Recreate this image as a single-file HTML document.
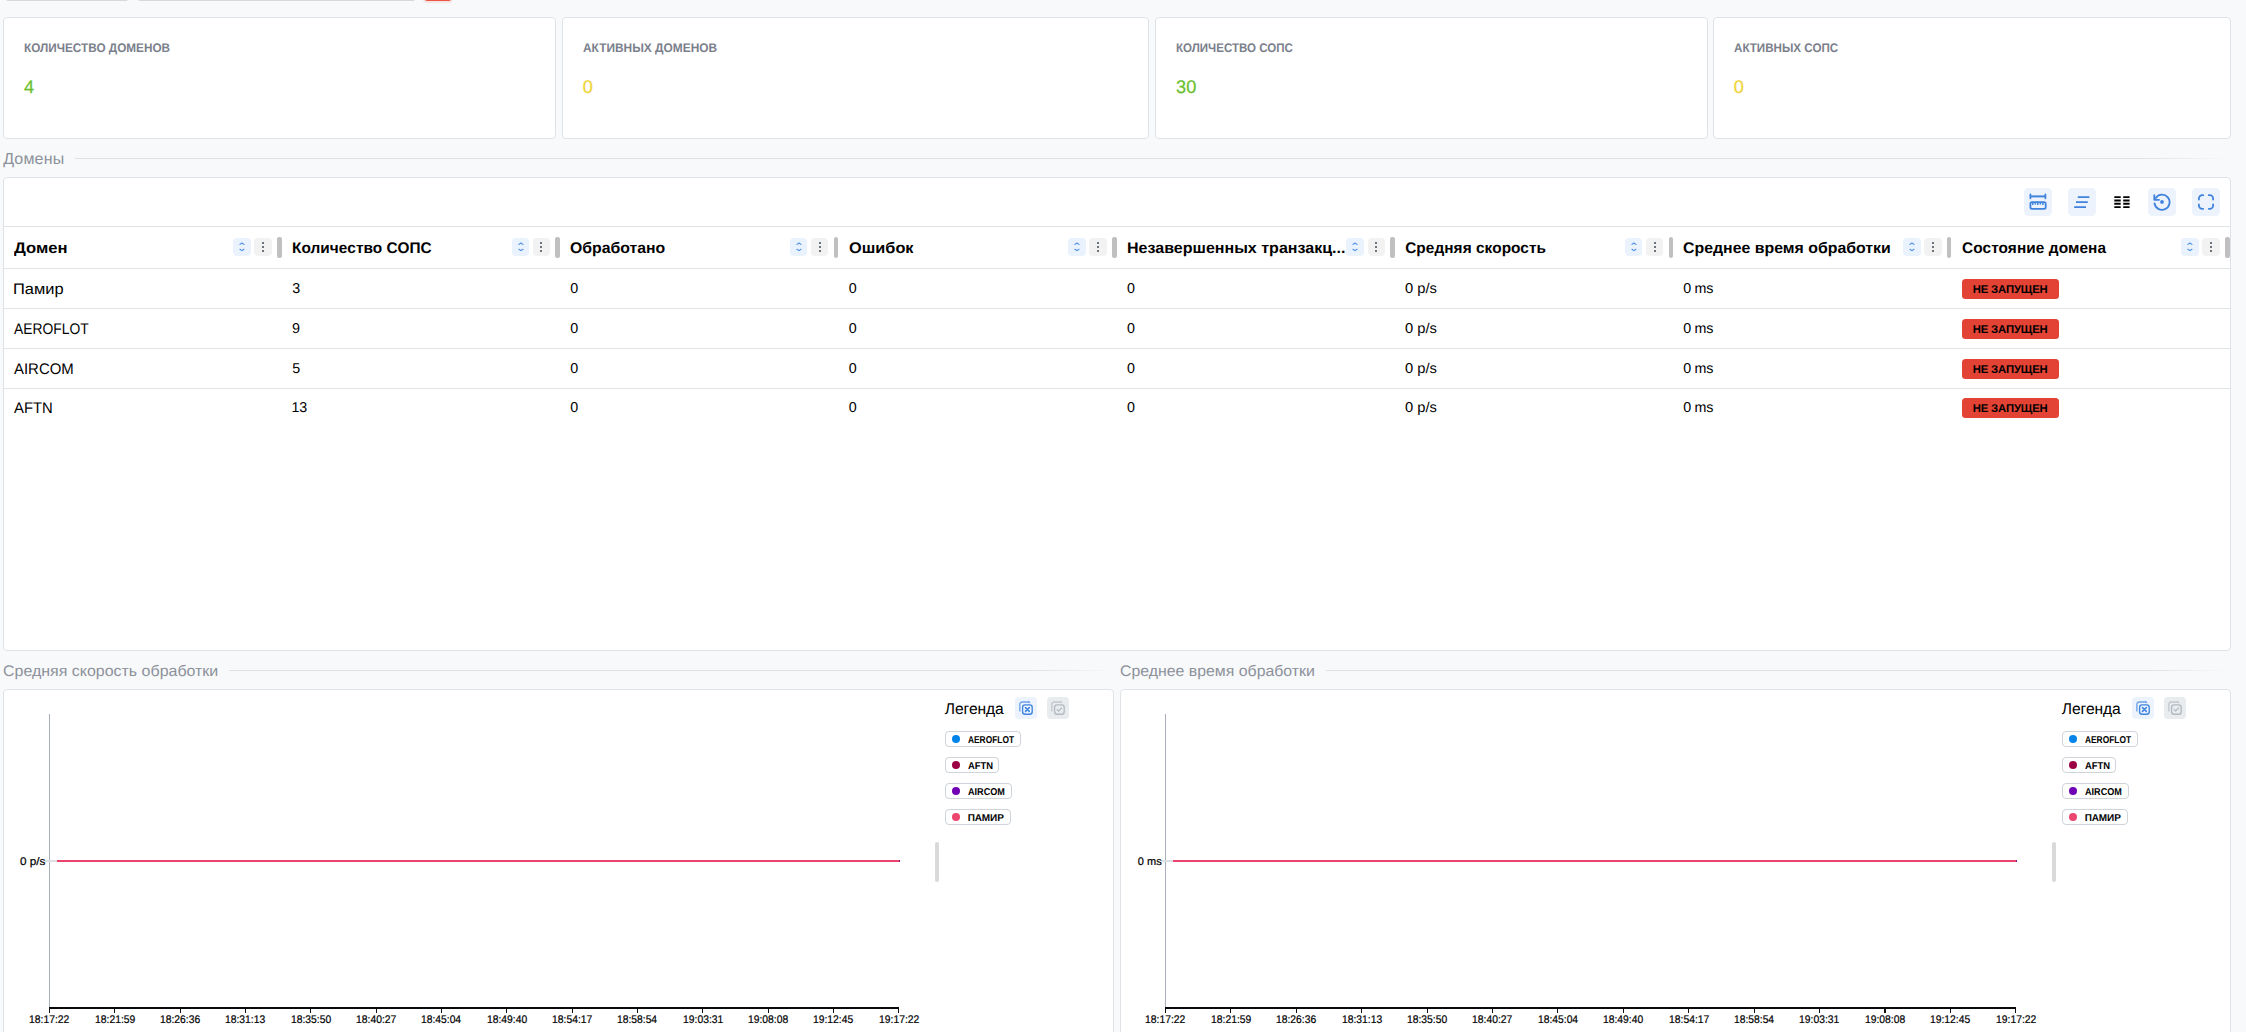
<!DOCTYPE html>
<html><head><meta charset="utf-8"><title>Dashboard</title>
<style>
html,body{margin:0;padding:0;}
body{width:2246px;height:1032px;overflow:hidden;background:#f8f9fb;position:relative;font-family:"Liberation Sans",sans-serif;text-rendering:geometricPrecision;}
.b{position:absolute;box-sizing:content-box;display:block;}
.t{position:absolute;white-space:nowrap;line-height:20px;height:20px;transform-origin:0 50%;}
</style></head><body>
<div class="b" style="left:6.3px;top:-3px;width:121.5px;height:4px;background:#d8d8d8;border-radius:0 0 2px 2px;"></div>
<div class="b" style="left:138.2px;top:-3px;width:276.6px;height:4px;background:#d8d8d8;border-radius:0 0 2px 2px;"></div>
<div class="b" style="left:425.1px;top:-3px;width:25.6px;height:3.9px;background:#ea5545;border-radius:0 0 2px 2px;box-shadow:0 0 0 2.2px rgba(231,76,60,.10);"></div>
<div class="b" style="left:3px;top:17px;width:551px;height:120px;background:#fff;border:1px solid #dfe3e8;border-radius:4px;"></div>
<div class="t" style="left:23.91px;top:37.57px;font-size:12.5px;font-weight:700;color:#7a808b;transform:scaleX(0.9402);">КОЛИЧЕСТВО ДОМЕНОВ</div>
<div class="t" style="left:23.88px;top:76.59px;font-size:18.2px;color:#6bbf2e;-webkit-text-stroke:0.25px #6bbf2e;">4</div>
<div class="b" style="left:562px;top:17px;width:585px;height:120px;background:#fff;border:1px solid #dfe3e8;border-radius:4px;"></div>
<div class="t" style="left:583.40px;top:37.57px;font-size:12.5px;font-weight:700;color:#7a808b;transform:scaleX(0.9523);">АКТИВНЫХ ДОМЕНОВ</div>
<div class="t" style="left:582.79px;top:76.59px;font-size:18.2px;color:#f0d43a;-webkit-text-stroke:0.25px #f0d43a;">0</div>
<div class="b" style="left:1155px;top:17px;width:551px;height:120px;background:#fff;border:1px solid #dfe3e8;border-radius:4px;"></div>
<div class="t" style="left:1176.23px;top:37.57px;font-size:12.5px;font-weight:700;color:#7a808b;transform:scaleX(0.9227);">КОЛИЧЕСТВО СОПС</div>
<div class="t" style="left:1176.11px;top:76.59px;font-size:18.2px;color:#6bbf2e;letter-spacing:0.060px;-webkit-text-stroke:0.25px #6bbf2e;">30</div>
<div class="b" style="left:1713px;top:17px;width:516px;height:120px;background:#fff;border:1px solid #dfe3e8;border-radius:4px;"></div>
<div class="t" style="left:1734.41px;top:37.57px;font-size:12.5px;font-weight:700;color:#7a808b;transform:scaleX(0.9293);">АКТИВНЫХ СОПС</div>
<div class="t" style="left:1733.79px;top:76.59px;font-size:18.2px;color:#f0d43a;-webkit-text-stroke:0.25px #f0d43a;">0</div>
<div class="t" style="left:3.18px;top:149.56px;font-size:16px;color:#8c919a;letter-spacing:0.172px;">Домены</div>
<div class="b" style="left:75px;top:158px;width:2155px;height:1px;background:linear-gradient(90deg,#dee1e6 95.8%,rgba(222,225,230,0));"></div>
<div class="b" style="left:3px;top:177px;width:2226px;height:472px;background:#fff;border:1px solid #dfe3e8;border-radius:4px;"></div>
<div class="b" style="left:4px;top:226px;width:2226px;height:1px;background:#dfe2e7;"></div>
<div class="b" style="left:4px;top:268px;width:2226px;height:1px;background:#dfe2e7;"></div>
<div class="b" style="left:4px;top:308px;width:2226px;height:1px;background:#dfe2e7;"></div>
<div class="b" style="left:4px;top:348px;width:2226px;height:1px;background:#dfe2e7;"></div>
<div class="b" style="left:4px;top:388px;width:2226px;height:1px;background:#dfe2e7;"></div>
<div class="b" style="left:2024.1px;top:188px;width:28px;height:28px;background:#ecf3fd;border-radius:4.5px;"></div>
<div class="b" style="left:2068.1px;top:188px;width:28px;height:28px;background:#ecf3fd;border-radius:4.5px;"></div>
<div class="b" style="left:2148.2px;top:188px;width:28px;height:28px;background:#ecf3fd;border-radius:4.5px;"></div>
<div class="b" style="left:2192.1px;top:188px;width:28px;height:28px;background:#ecf3fd;border-radius:4.5px;"></div>
<svg class="b" style="left:2024.1px;top:187.9px" width="28" height="28" viewBox="0 0 28 28" fill="none" stroke="#4083dd" stroke-width="1.8" ><path d="M6.4 6.5v3.8M21.4 6.5v3.8" stroke-linecap="round"/><path d="M6.3 8.4h15.2" stroke-width="2"/><rect x="6.4" y="14.1" width="15.3" height="6.7" rx="1.6"/><path d="M8.8 14.5v2.6M11.3 14.5v1.9M13.8 14.5v2.6M16.4 14.5v1.9M18.9 14.5v2.6" stroke-width="1.5"/></svg>
<svg class="b" style="left:2068.1px;top:187.9px" width="28" height="28" viewBox="0 0 28 28" fill="none" stroke="#4083dd" stroke-width="1.8" ><path d="M9.8 9.1h11.6M8 14.1h11.8M6.2 19.2h11.8" stroke-linecap="butt"/></svg>
<svg class="b" style="left:2110px;top:187.9px" width="28" height="28" viewBox="0 0 28 28" fill="none" stroke="#000" stroke-width="1.9" ><path d="M4.3 9.1h6.4M4.3 12.5h6.4M4.3 15.7h6.4M4.3 19.1h6.4M13.2 9.1h6.4M13.2 12.5h6.4M13.2 15.7h6.4M13.2 19.1h6.4"/></svg>
<svg class="b" style="left:2148.2px;top:187.9px" width="28" height="28" viewBox="0 0 28 28" fill="none" stroke="#4083dd" stroke-width="1.8" ><path d="M6.55 15.3A7.55 7.55 0 1 0 7.8 10.0" stroke-linecap="round"/><path d="M6.3 7.2v4.6h4.7" stroke-linecap="round" stroke-linejoin="round"/><circle cx="14.0" cy="13.9" r="1.9" fill="#4083dd" stroke="none"/></svg>
<svg class="b" style="left:2192.1px;top:187.9px" width="28" height="28" viewBox="0 0 28 28" fill="none" stroke="#4083dd" stroke-width="1.8" ><path d="M6.9 11.5V10.6A3.4 3.4 0 0 1 10.3 7.2H11.2M16.8 7.2H17.700000000000003A3.4 3.4 0 0 1 21.1 10.6V11.5M21.1 16.5V17.400000000000002A3.4 3.4 0 0 1 17.700000000000003 20.8H16.8M11.2 20.8H10.3A3.4 3.4 0 0 1 6.9 17.400000000000002V16.5" stroke-linecap="round"/></svg>
<div class="t" style="left:14.15px;top:238.66px;font-size:15.4px;font-weight:700;color:#000;transform:scaleX(1.0821);">Домен</div>
<div class="b" style="left:233.2px;top:238.3px;width:17.6px;height:17.6px;background:#eaf2fd;border-radius:4px;"></div>
<svg class="b" style="left:233.2px;top:238.3px" width="17.6" height="17.6" viewBox="0 0 17.6 17.6" fill="none" stroke="#4a8fe7" stroke-width="1.15" stroke-linecap="round" stroke-linejoin="round"><path d="M6.95 6.4L8.95 5.0L10.95 6.4M6.95 11.3L8.95 12.65L10.95 11.3"/></svg>
<div class="b" style="left:254.3px;top:238.3px;width:17.6px;height:17.6px;background:#f2f2f2;border-radius:4px;"></div>
<div class="b" style="left:262.0px;top:242px;width:2.2px;height:2.2px;background:#6c757d;"></div>
<div class="b" style="left:262.0px;top:246.1px;width:2.2px;height:2.2px;background:#6c757d;"></div>
<div class="b" style="left:262.0px;top:250.2px;width:2.2px;height:2.2px;background:#6c757d;"></div>
<div class="b" style="left:277.0px;top:237px;width:4.7px;height:20.8px;background:#c0c0c0;border-radius:2px;"></div>
<div class="t" style="left:291.97px;top:238.66px;font-size:15.4px;font-weight:700;color:#000;letter-spacing:0.060px;">Количество СОПС</div>
<div class="b" style="left:511.5px;top:238.3px;width:17.6px;height:17.6px;background:#eaf2fd;border-radius:4px;"></div>
<svg class="b" style="left:511.5px;top:238.3px" width="17.6" height="17.6" viewBox="0 0 17.6 17.6" fill="none" stroke="#4a8fe7" stroke-width="1.15" stroke-linecap="round" stroke-linejoin="round"><path d="M6.95 6.4L8.95 5.0L10.95 6.4M6.95 11.3L8.95 12.65L10.95 11.3"/></svg>
<div class="b" style="left:532.6px;top:238.3px;width:17.6px;height:17.6px;background:#f2f2f2;border-radius:4px;"></div>
<div class="b" style="left:540.3px;top:242px;width:2.2px;height:2.2px;background:#6c757d;"></div>
<div class="b" style="left:540.3px;top:246.1px;width:2.2px;height:2.2px;background:#6c757d;"></div>
<div class="b" style="left:540.3px;top:250.2px;width:2.2px;height:2.2px;background:#6c757d;"></div>
<div class="b" style="left:555.3px;top:237px;width:4.7px;height:20.8px;background:#c0c0c0;border-radius:2px;"></div>
<div class="t" style="left:570.15px;top:238.66px;font-size:15.4px;font-weight:700;color:#000;transform:scaleX(1.0265);">Обработано</div>
<div class="b" style="left:789.8px;top:238.3px;width:17.6px;height:17.6px;background:#eaf2fd;border-radius:4px;"></div>
<svg class="b" style="left:789.8px;top:238.3px" width="17.6" height="17.6" viewBox="0 0 17.6 17.6" fill="none" stroke="#4a8fe7" stroke-width="1.15" stroke-linecap="round" stroke-linejoin="round"><path d="M6.95 6.4L8.95 5.0L10.95 6.4M6.95 11.3L8.95 12.65L10.95 11.3"/></svg>
<div class="b" style="left:810.9px;top:238.3px;width:17.6px;height:17.6px;background:#f2f2f2;border-radius:4px;"></div>
<div class="b" style="left:818.6px;top:242px;width:2.2px;height:2.2px;background:#6c757d;"></div>
<div class="b" style="left:818.6px;top:246.1px;width:2.2px;height:2.2px;background:#6c757d;"></div>
<div class="b" style="left:818.6px;top:250.2px;width:2.2px;height:2.2px;background:#6c757d;"></div>
<div class="b" style="left:833.6px;top:237px;width:4.7px;height:20.8px;background:#c0c0c0;border-radius:2px;"></div>
<div class="t" style="left:848.53px;top:238.66px;font-size:15.4px;font-weight:700;color:#000;transform:scaleX(1.0600);">Ошибок</div>
<div class="b" style="left:1068.1px;top:238.3px;width:17.6px;height:17.6px;background:#eaf2fd;border-radius:4px;"></div>
<svg class="b" style="left:1068.1px;top:238.3px" width="17.6" height="17.6" viewBox="0 0 17.6 17.6" fill="none" stroke="#4a8fe7" stroke-width="1.15" stroke-linecap="round" stroke-linejoin="round"><path d="M6.95 6.4L8.95 5.0L10.95 6.4M6.95 11.3L8.95 12.65L10.95 11.3"/></svg>
<div class="b" style="left:1089.2px;top:238.3px;width:17.6px;height:17.6px;background:#f2f2f2;border-radius:4px;"></div>
<div class="b" style="left:1096.9px;top:242px;width:2.2px;height:2.2px;background:#6c757d;"></div>
<div class="b" style="left:1096.9px;top:246.1px;width:2.2px;height:2.2px;background:#6c757d;"></div>
<div class="b" style="left:1096.9px;top:250.2px;width:2.2px;height:2.2px;background:#6c757d;"></div>
<div class="b" style="left:1111.9px;top:237px;width:4.7px;height:20.8px;background:#c0c0c0;border-radius:2px;"></div>
<div class="t" style="left:1126.93px;top:238.66px;font-size:15.4px;font-weight:700;color:#000;transform:scaleX(1.0418);">Незавершенных транзакц...</div>
<div class="b" style="left:1346.4px;top:238.3px;width:17.6px;height:17.6px;background:#eaf2fd;border-radius:4px;"></div>
<svg class="b" style="left:1346.4px;top:238.3px" width="17.6" height="17.6" viewBox="0 0 17.6 17.6" fill="none" stroke="#4a8fe7" stroke-width="1.15" stroke-linecap="round" stroke-linejoin="round"><path d="M6.95 6.4L8.95 5.0L10.95 6.4M6.95 11.3L8.95 12.65L10.95 11.3"/></svg>
<div class="b" style="left:1367.5px;top:238.3px;width:17.6px;height:17.6px;background:#f2f2f2;border-radius:4px;"></div>
<div class="b" style="left:1375.2px;top:242px;width:2.2px;height:2.2px;background:#6c757d;"></div>
<div class="b" style="left:1375.2px;top:246.1px;width:2.2px;height:2.2px;background:#6c757d;"></div>
<div class="b" style="left:1375.2px;top:250.2px;width:2.2px;height:2.2px;background:#6c757d;"></div>
<div class="b" style="left:1390.2px;top:237px;width:4.7px;height:20.8px;background:#c0c0c0;border-radius:2px;"></div>
<div class="t" style="left:1405.17px;top:238.66px;font-size:15.4px;font-weight:700;color:#000;letter-spacing:0.059px;">Средняя скорость</div>
<div class="b" style="left:1624.7px;top:238.3px;width:17.6px;height:17.6px;background:#eaf2fd;border-radius:4px;"></div>
<svg class="b" style="left:1624.7px;top:238.3px" width="17.6" height="17.6" viewBox="0 0 17.6 17.6" fill="none" stroke="#4a8fe7" stroke-width="1.15" stroke-linecap="round" stroke-linejoin="round"><path d="M6.95 6.4L8.95 5.0L10.95 6.4M6.95 11.3L8.95 12.65L10.95 11.3"/></svg>
<div class="b" style="left:1645.8px;top:238.3px;width:17.6px;height:17.6px;background:#f2f2f2;border-radius:4px;"></div>
<div class="b" style="left:1653.5px;top:242px;width:2.2px;height:2.2px;background:#6c757d;"></div>
<div class="b" style="left:1653.5px;top:246.1px;width:2.2px;height:2.2px;background:#6c757d;"></div>
<div class="b" style="left:1653.5px;top:250.2px;width:2.2px;height:2.2px;background:#6c757d;"></div>
<div class="b" style="left:1668.5px;top:237px;width:4.7px;height:20.8px;background:#c0c0c0;border-radius:2px;"></div>
<div class="t" style="left:1683.05px;top:238.66px;font-size:15.4px;font-weight:700;color:#000;transform:scaleX(1.0314);">Среднее время обработки</div>
<div class="b" style="left:1903.0px;top:238.3px;width:17.6px;height:17.6px;background:#eaf2fd;border-radius:4px;"></div>
<svg class="b" style="left:1903.0px;top:238.3px" width="17.6" height="17.6" viewBox="0 0 17.6 17.6" fill="none" stroke="#4a8fe7" stroke-width="1.15" stroke-linecap="round" stroke-linejoin="round"><path d="M6.95 6.4L8.95 5.0L10.95 6.4M6.95 11.3L8.95 12.65L10.95 11.3"/></svg>
<div class="b" style="left:1924.1px;top:238.3px;width:17.6px;height:17.6px;background:#f2f2f2;border-radius:4px;"></div>
<div class="b" style="left:1931.8px;top:242px;width:2.2px;height:2.2px;background:#6c757d;"></div>
<div class="b" style="left:1931.8px;top:246.1px;width:2.2px;height:2.2px;background:#6c757d;"></div>
<div class="b" style="left:1931.8px;top:250.2px;width:2.2px;height:2.2px;background:#6c757d;"></div>
<div class="b" style="left:1946.8px;top:237px;width:4.7px;height:20.8px;background:#c0c0c0;border-radius:2px;"></div>
<div class="t" style="left:1962.07px;top:238.66px;font-size:15.4px;font-weight:700;color:#000;letter-spacing:0.079px;">Состояние домена</div>
<div class="b" style="left:2181.3px;top:238.3px;width:17.6px;height:17.6px;background:#eaf2fd;border-radius:4px;"></div>
<svg class="b" style="left:2181.3px;top:238.3px" width="17.6" height="17.6" viewBox="0 0 17.6 17.6" fill="none" stroke="#4a8fe7" stroke-width="1.15" stroke-linecap="round" stroke-linejoin="round"><path d="M6.95 6.4L8.95 5.0L10.95 6.4M6.95 11.3L8.95 12.65L10.95 11.3"/></svg>
<div class="b" style="left:2202.4px;top:238.3px;width:17.6px;height:17.6px;background:#f2f2f2;border-radius:4px;"></div>
<div class="b" style="left:2210.1px;top:242px;width:2.2px;height:2.2px;background:#6c757d;"></div>
<div class="b" style="left:2210.1px;top:246.1px;width:2.2px;height:2.2px;background:#6c757d;"></div>
<div class="b" style="left:2210.1px;top:250.2px;width:2.2px;height:2.2px;background:#6c757d;"></div>
<div class="b" style="left:2225.1px;top:237px;width:4.7px;height:20.8px;background:#c0c0c0;border-radius:2px;"></div>
<div class="t" style="left:12.97px;top:279.86px;font-size:15.4px;color:#000;transform:scaleX(1.0683);">Памир</div>
<div class="t" style="left:292.16px;top:278.95px;font-size:14.3px;color:#000;">3</div>
<div class="t" style="left:570.34px;top:278.95px;font-size:14.3px;color:#000;">0</div>
<div class="t" style="left:848.64px;top:278.95px;font-size:14.3px;color:#000;">0</div>
<div class="t" style="left:1126.94px;top:278.95px;font-size:14.3px;color:#000;">0</div>
<div class="t" style="left:1404.83px;top:278.95px;font-size:14.3px;color:#000;transform:scaleX(1.0292);">0 p/s</div>
<div class="t" style="left:1683.14px;top:278.95px;font-size:14.3px;color:#000;letter-spacing:-0.238px;">0 ms</div>
<div class="b" style="left:1962px;top:279px;width:97px;height:20px;background:#e34335;border-radius:3.5px;"></div>
<div class="t" style="left:1972.64px;top:279.88px;font-size:11.3px;font-weight:700;color:#000;letter-spacing:-0.125px;">НЕ ЗАПУЩЕН</div>
<div class="t" style="left:14.27px;top:319.86px;font-size:15.4px;color:#000;transform:scaleX(0.8993);">AEROFLOT</div>
<div class="t" style="left:292.03px;top:318.85px;font-size:14.3px;color:#000;">9</div>
<div class="t" style="left:570.34px;top:318.85px;font-size:14.3px;color:#000;">0</div>
<div class="t" style="left:848.64px;top:318.85px;font-size:14.3px;color:#000;">0</div>
<div class="t" style="left:1126.94px;top:318.85px;font-size:14.3px;color:#000;">0</div>
<div class="t" style="left:1404.83px;top:318.85px;font-size:14.3px;color:#000;transform:scaleX(1.0292);">0 p/s</div>
<div class="t" style="left:1683.14px;top:318.85px;font-size:14.3px;color:#000;letter-spacing:-0.238px;">0 ms</div>
<div class="b" style="left:1962px;top:319px;width:97px;height:20px;background:#e34335;border-radius:3.5px;"></div>
<div class="t" style="left:1972.64px;top:319.78px;font-size:11.3px;font-weight:700;color:#000;letter-spacing:-0.125px;">НЕ ЗАПУЩЕН</div>
<div class="t" style="left:14.27px;top:359.86px;font-size:15.4px;color:#000;transform:scaleX(0.9700);">AIRCOM</div>
<div class="t" style="left:292.13px;top:358.75px;font-size:14.3px;color:#000;">5</div>
<div class="t" style="left:570.34px;top:358.75px;font-size:14.3px;color:#000;">0</div>
<div class="t" style="left:848.64px;top:358.75px;font-size:14.3px;color:#000;">0</div>
<div class="t" style="left:1126.94px;top:358.75px;font-size:14.3px;color:#000;">0</div>
<div class="t" style="left:1404.83px;top:358.75px;font-size:14.3px;color:#000;transform:scaleX(1.0292);">0 p/s</div>
<div class="t" style="left:1683.14px;top:358.75px;font-size:14.3px;color:#000;letter-spacing:-0.238px;">0 ms</div>
<div class="b" style="left:1962px;top:359px;width:97px;height:20px;background:#e34335;border-radius:3.5px;"></div>
<div class="t" style="left:1972.64px;top:359.68px;font-size:11.3px;font-weight:700;color:#000;letter-spacing:-0.125px;">НЕ ЗАПУЩЕН</div>
<div class="t" style="left:14.27px;top:398.76px;font-size:15.4px;color:#000;transform:scaleX(0.9635);">AFTN</div>
<div class="t" style="left:291.61px;top:397.95px;font-size:14.3px;color:#000;letter-spacing:-0.188px;">13</div>
<div class="t" style="left:570.34px;top:397.95px;font-size:14.3px;color:#000;">0</div>
<div class="t" style="left:848.64px;top:397.95px;font-size:14.3px;color:#000;">0</div>
<div class="t" style="left:1126.94px;top:397.95px;font-size:14.3px;color:#000;">0</div>
<div class="t" style="left:1404.83px;top:397.95px;font-size:14.3px;color:#000;transform:scaleX(1.0292);">0 p/s</div>
<div class="t" style="left:1683.14px;top:397.95px;font-size:14.3px;color:#000;letter-spacing:-0.238px;">0 ms</div>
<div class="b" style="left:1962px;top:398px;width:97px;height:20px;background:#e34335;border-radius:3.5px;"></div>
<div class="t" style="left:1972.64px;top:398.88px;font-size:11.3px;font-weight:700;color:#000;letter-spacing:-0.125px;">НЕ ЗАПУЩЕН</div>
<div class="t" style="left:2.79px;top:661.76px;font-size:15.4px;color:#8c919a;transform:scaleX(1.0372);">Средняя скорость обработки</div>
<div class="b" style="left:229px;top:670px;width:884px;height:1px;background:linear-gradient(90deg,#dee1e6 90.7%,rgba(222,225,230,0));"></div>
<div class="b" style="left:3px;top:689px;width:1109px;height:350px;background:#fff;border:1px solid #dfe3e8;border-radius:4px;"></div>
<div class="b" style="left:49px;top:714px;width:1px;height:293px;background:#a9afba;"></div>
<div class="b" style="left:49px;top:1007px;width:850.0px;height:2.2px;background:#080a0e;"></div>
<div class="b" style="left:48.9px;top:1009px;width:1.1px;height:3.9px;background:#111;"></div>
<div class="t" style="left:29.26px;top:1010.09px;font-size:11px;color:#000;transform:scaleX(0.9414);-webkit-text-stroke:0.2px #000;">18:17:22</div>
<div class="b" style="left:114.24px;top:1009px;width:1.1px;height:3.9px;background:#111;"></div>
<div class="t" style="left:94.60px;top:1010.09px;font-size:11px;color:#000;transform:scaleX(0.9407);-webkit-text-stroke:0.2px #000;">18:21:59</div>
<div class="b" style="left:179.58px;top:1009px;width:1.1px;height:3.9px;background:#111;"></div>
<div class="t" style="left:159.94px;top:1010.09px;font-size:11px;color:#000;transform:scaleX(0.9398);-webkit-text-stroke:0.2px #000;">18:26:36</div>
<div class="b" style="left:244.92px;top:1009px;width:1.1px;height:3.9px;background:#111;"></div>
<div class="t" style="left:225.28px;top:1010.09px;font-size:11px;color:#000;transform:scaleX(0.9398);-webkit-text-stroke:0.2px #000;">18:31:13</div>
<div class="b" style="left:310.25px;top:1009px;width:1.1px;height:3.9px;background:#111;"></div>
<div class="t" style="left:290.62px;top:1010.09px;font-size:11px;color:#000;transform:scaleX(0.9386);-webkit-text-stroke:0.2px #000;">18:35:50</div>
<div class="b" style="left:375.59px;top:1009px;width:1.1px;height:3.9px;background:#111;"></div>
<div class="t" style="left:355.95px;top:1010.09px;font-size:11px;color:#000;transform:scaleX(0.9414);-webkit-text-stroke:0.2px #000;">18:40:27</div>
<div class="b" style="left:440.93px;top:1009px;width:1.1px;height:3.9px;background:#111;"></div>
<div class="t" style="left:421.30px;top:1010.09px;font-size:11px;color:#000;transform:scaleX(0.9362);-webkit-text-stroke:0.2px #000;">18:45:04</div>
<div class="b" style="left:506.27px;top:1009px;width:1.1px;height:3.9px;background:#111;"></div>
<div class="t" style="left:486.63px;top:1010.09px;font-size:11px;color:#000;transform:scaleX(0.9386);-webkit-text-stroke:0.2px #000;">18:49:40</div>
<div class="b" style="left:571.61px;top:1009px;width:1.1px;height:3.9px;background:#111;"></div>
<div class="t" style="left:551.97px;top:1010.09px;font-size:11px;color:#000;transform:scaleX(0.9414);-webkit-text-stroke:0.2px #000;">18:54:17</div>
<div class="b" style="left:636.95px;top:1009px;width:1.1px;height:3.9px;background:#111;"></div>
<div class="t" style="left:617.31px;top:1010.09px;font-size:11px;color:#000;transform:scaleX(0.9362);-webkit-text-stroke:0.2px #000;">18:58:54</div>
<div class="b" style="left:702.28px;top:1009px;width:1.1px;height:3.9px;background:#111;"></div>
<div class="t" style="left:682.65px;top:1010.09px;font-size:11px;color:#000;transform:scaleX(0.9410);-webkit-text-stroke:0.2px #000;">19:03:31</div>
<div class="b" style="left:767.62px;top:1009px;width:1.1px;height:3.9px;background:#111;"></div>
<div class="t" style="left:747.99px;top:1010.09px;font-size:11px;color:#000;transform:scaleX(0.9397);-webkit-text-stroke:0.2px #000;">19:08:08</div>
<div class="b" style="left:832.96px;top:1009px;width:1.1px;height:3.9px;background:#111;"></div>
<div class="t" style="left:813.32px;top:1010.09px;font-size:11px;color:#000;transform:scaleX(0.9393);-webkit-text-stroke:0.2px #000;">19:12:45</div>
<div class="b" style="left:898.3px;top:1009px;width:1.1px;height:3.9px;background:#111;"></div>
<div class="t" style="left:878.66px;top:1010.09px;font-size:11px;color:#000;transform:scaleX(0.9414);-webkit-text-stroke:0.2px #000;">19:17:22</div>
<div class="b" style="left:45.4px;top:860px;width:11.3px;height:2.1px;background:#dcdfe3;"></div>
<div class="t" style="left:20.34px;top:852.29px;font-size:11px;color:#000;transform:scaleX(1.0686);-webkit-text-stroke:0.2px #000;">0 p/s</div>
<div class="b" style="left:56.7px;top:860px;width:843.3px;height:2.1px;background:#ec426b;"></div>
<div class="b" style="left:899.0px;top:860px;width:1px;height:2.1px;background:#8a1a8a;"></div>
<div class="b" style="left:935px;top:842px;width:4px;height:40px;background:#d9d9d9;border-radius:2px;"></div>
<div class="t" style="left:944.86px;top:700.09px;font-size:15.6px;color:#000;letter-spacing:-0.073px;">Легенда</div>
<div class="b" style="left:1015.1px;top:697px;width:21.9px;height:22px;background:#ecf3fd;border-radius:4px;"></div>
<svg class="b" style="left:1015.1px;top:697px" width="22" height="22" viewBox="0 0 22 22" fill="none" stroke="#3f84e0" stroke-width="1.35" stroke-linecap="round" stroke-linejoin="round"><path d="M4.85 14.4V7.3A2.3 2.3 0 0 1 7.15 5H14.1" stroke="#6fa3e8" stroke-linecap="butt"/><path d="M13.6 4.3l1.1 1.3" stroke="#6fa3e8" stroke-width="1.2"/><rect x="7.6" y="7.8" width="9.6" height="9.4" rx="2.5"/><path d="M10.5 10.6l3.8 3.8M14.3 10.6l-3.8 3.8" stroke-width="1.5"/></svg>
<div class="b" style="left:1047.1px;top:697px;width:21.9px;height:22px;background:#e9ecef;border-radius:4px;"></div>
<svg class="b" style="left:1047.1px;top:697px" width="22" height="22" viewBox="0 0 22 22" fill="none" stroke="#b4b9c1" stroke-width="1.35" stroke-linecap="round" stroke-linejoin="round"><path d="M4.85 14.4V7.3A2.3 2.3 0 0 1 7.15 5H14.1" stroke="#c3c7cd" stroke-linecap="butt"/><path d="M13.6 4.3l1.1 1.3" stroke="#c3c7cd" stroke-width="1.2"/><rect x="7.6" y="7.8" width="9.6" height="9.4" rx="2.5"/><path d="M10.2 12.7l1.4 1.3l3.1-3.1" stroke-width="1.2"/></svg>
<div class="b" style="left:945px;top:731px;width:74px;height:14px;border:1px solid #ced4da;border-radius:4px;background:#fff;"></div>
<div class="b" style="left:951.9px;top:734.9px;width:8.3px;height:8.3px;background:#0084e8;border-radius:50%;"></div>
<div class="t" style="left:967.89px;top:730.64px;font-size:10.0px;font-weight:700;color:#000;transform:scaleX(0.8364);">AEROFLOT</div>
<div class="b" style="left:945px;top:757px;width:52px;height:14px;border:1px solid #ced4da;border-radius:4px;background:#fff;"></div>
<div class="b" style="left:951.9px;top:760.9px;width:8.3px;height:8.3px;background:#9b0045;border-radius:50%;"></div>
<div class="t" style="left:967.77px;top:756.64px;font-size:10.0px;font-weight:700;color:#000;transform:scaleX(0.9403);">AFTN</div>
<div class="b" style="left:945px;top:783px;width:65px;height:14px;border:1px solid #ced4da;border-radius:4px;background:#fff;"></div>
<div class="b" style="left:951.9px;top:786.9px;width:8.3px;height:8.3px;background:#6f00b3;border-radius:50%;"></div>
<div class="t" style="left:967.77px;top:782.64px;font-size:10.0px;font-weight:700;color:#000;transform:scaleX(0.9083);">AIRCOM</div>
<div class="b" style="left:945px;top:809px;width:64px;height:14px;border:1px solid #ced4da;border-radius:4px;background:#fff;"></div>
<div class="b" style="left:951.9px;top:812.9px;width:8.3px;height:8.3px;background:#ed466e;border-radius:50%;"></div>
<div class="t" style="left:967.63px;top:808.64px;font-size:10.0px;font-weight:700;color:#000;letter-spacing:-0.096px;">ПАМИР</div>
<div class="t" style="left:1119.79px;top:661.76px;font-size:15.4px;color:#8c919a;transform:scaleX(1.0303);">Среднее время обработки</div>
<div class="b" style="left:1326px;top:670px;width:904px;height:1px;background:linear-gradient(90deg,#dee1e6 90.9%,rgba(222,225,230,0));"></div>
<div class="b" style="left:1120px;top:689px;width:1109px;height:350px;background:#fff;border:1px solid #dfe3e8;border-radius:4px;"></div>
<div class="b" style="left:1165px;top:714px;width:1px;height:293px;background:#a9afba;"></div>
<div class="b" style="left:1165px;top:1007px;width:851.0px;height:2.2px;background:#080a0e;"></div>
<div class="b" style="left:1164.9px;top:1009px;width:1.1px;height:3.9px;background:#111;"></div>
<div class="t" style="left:1145.26px;top:1010.09px;font-size:11px;color:#000;transform:scaleX(0.9414);-webkit-text-stroke:0.2px #000;">18:17:22</div>
<div class="b" style="left:1230.32px;top:1009px;width:1.1px;height:3.9px;background:#111;"></div>
<div class="t" style="left:1210.68px;top:1010.09px;font-size:11px;color:#000;transform:scaleX(0.9407);-webkit-text-stroke:0.2px #000;">18:21:59</div>
<div class="b" style="left:1295.73px;top:1009px;width:1.1px;height:3.9px;background:#111;"></div>
<div class="t" style="left:1276.09px;top:1010.09px;font-size:11px;color:#000;transform:scaleX(0.9398);-webkit-text-stroke:0.2px #000;">18:26:36</div>
<div class="b" style="left:1361.15px;top:1009px;width:1.1px;height:3.9px;background:#111;"></div>
<div class="t" style="left:1341.51px;top:1010.09px;font-size:11px;color:#000;transform:scaleX(0.9398);-webkit-text-stroke:0.2px #000;">18:31:13</div>
<div class="b" style="left:1426.56px;top:1009px;width:1.1px;height:3.9px;background:#111;"></div>
<div class="t" style="left:1406.93px;top:1010.09px;font-size:11px;color:#000;transform:scaleX(0.9386);-webkit-text-stroke:0.2px #000;">18:35:50</div>
<div class="b" style="left:1491.98px;top:1009px;width:1.1px;height:3.9px;background:#111;"></div>
<div class="t" style="left:1472.34px;top:1010.09px;font-size:11px;color:#000;transform:scaleX(0.9414);-webkit-text-stroke:0.2px #000;">18:40:27</div>
<div class="b" style="left:1557.39px;top:1009px;width:1.1px;height:3.9px;background:#111;"></div>
<div class="t" style="left:1537.76px;top:1010.09px;font-size:11px;color:#000;transform:scaleX(0.9362);-webkit-text-stroke:0.2px #000;">18:45:04</div>
<div class="b" style="left:1622.81px;top:1009px;width:1.1px;height:3.9px;background:#111;"></div>
<div class="t" style="left:1603.17px;top:1010.09px;font-size:11px;color:#000;transform:scaleX(0.9386);-webkit-text-stroke:0.2px #000;">18:49:40</div>
<div class="b" style="left:1688.22px;top:1009px;width:1.1px;height:3.9px;background:#111;"></div>
<div class="t" style="left:1668.58px;top:1010.09px;font-size:11px;color:#000;transform:scaleX(0.9414);-webkit-text-stroke:0.2px #000;">18:54:17</div>
<div class="b" style="left:1753.64px;top:1009px;width:1.1px;height:3.9px;background:#111;"></div>
<div class="t" style="left:1734.00px;top:1010.09px;font-size:11px;color:#000;transform:scaleX(0.9362);-webkit-text-stroke:0.2px #000;">18:58:54</div>
<div class="b" style="left:1819.05px;top:1009px;width:1.1px;height:3.9px;background:#111;"></div>
<div class="t" style="left:1799.42px;top:1010.09px;font-size:11px;color:#000;transform:scaleX(0.9410);-webkit-text-stroke:0.2px #000;">19:03:31</div>
<div class="b" style="left:1884.47px;top:1009px;width:1.1px;height:3.9px;background:#111;"></div>
<div class="t" style="left:1864.83px;top:1010.09px;font-size:11px;color:#000;transform:scaleX(0.9397);-webkit-text-stroke:0.2px #000;">19:08:08</div>
<div class="b" style="left:1949.88px;top:1009px;width:1.1px;height:3.9px;background:#111;"></div>
<div class="t" style="left:1930.25px;top:1010.09px;font-size:11px;color:#000;transform:scaleX(0.9393);-webkit-text-stroke:0.2px #000;">19:12:45</div>
<div class="b" style="left:2015.3px;top:1009px;width:1.1px;height:3.9px;background:#111;"></div>
<div class="t" style="left:1995.66px;top:1010.09px;font-size:11px;color:#000;transform:scaleX(0.9414);-webkit-text-stroke:0.2px #000;">19:17:22</div>
<div class="b" style="left:1161.4px;top:860px;width:11.3px;height:2.1px;background:#dcdfe3;"></div>
<div class="t" style="left:1137.67px;top:852.29px;font-size:11px;color:#000;letter-spacing:0.097px;-webkit-text-stroke:0.2px #000;">0 ms</div>
<div class="b" style="left:1172.7px;top:860px;width:844.3px;height:2.1px;background:#ec426b;"></div>
<div class="b" style="left:2016.0px;top:860px;width:1px;height:2.1px;background:#8a1a8a;"></div>
<div class="b" style="left:2052px;top:842px;width:4px;height:40px;background:#d9d9d9;border-radius:2px;"></div>
<div class="t" style="left:2061.86px;top:700.09px;font-size:15.6px;color:#000;letter-spacing:-0.073px;">Легенда</div>
<div class="b" style="left:2132.1px;top:697px;width:21.9px;height:22px;background:#ecf3fd;border-radius:4px;"></div>
<svg class="b" style="left:2132.1px;top:697px" width="22" height="22" viewBox="0 0 22 22" fill="none" stroke="#3f84e0" stroke-width="1.35" stroke-linecap="round" stroke-linejoin="round"><path d="M4.85 14.4V7.3A2.3 2.3 0 0 1 7.15 5H14.1" stroke="#6fa3e8" stroke-linecap="butt"/><path d="M13.6 4.3l1.1 1.3" stroke="#6fa3e8" stroke-width="1.2"/><rect x="7.6" y="7.8" width="9.6" height="9.4" rx="2.5"/><path d="M10.5 10.6l3.8 3.8M14.3 10.6l-3.8 3.8" stroke-width="1.5"/></svg>
<div class="b" style="left:2164.1px;top:697px;width:21.9px;height:22px;background:#e9ecef;border-radius:4px;"></div>
<svg class="b" style="left:2164.1px;top:697px" width="22" height="22" viewBox="0 0 22 22" fill="none" stroke="#b4b9c1" stroke-width="1.35" stroke-linecap="round" stroke-linejoin="round"><path d="M4.85 14.4V7.3A2.3 2.3 0 0 1 7.15 5H14.1" stroke="#c3c7cd" stroke-linecap="butt"/><path d="M13.6 4.3l1.1 1.3" stroke="#c3c7cd" stroke-width="1.2"/><rect x="7.6" y="7.8" width="9.6" height="9.4" rx="2.5"/><path d="M10.2 12.7l1.4 1.3l3.1-3.1" stroke-width="1.2"/></svg>
<div class="b" style="left:2062px;top:731px;width:74px;height:14px;border:1px solid #ced4da;border-radius:4px;background:#fff;"></div>
<div class="b" style="left:2068.9px;top:734.9px;width:8.3px;height:8.3px;background:#0084e8;border-radius:50%;"></div>
<div class="t" style="left:2084.89px;top:730.64px;font-size:10.0px;font-weight:700;color:#000;transform:scaleX(0.8364);">AEROFLOT</div>
<div class="b" style="left:2062px;top:757px;width:52px;height:14px;border:1px solid #ced4da;border-radius:4px;background:#fff;"></div>
<div class="b" style="left:2068.9px;top:760.9px;width:8.3px;height:8.3px;background:#9b0045;border-radius:50%;"></div>
<div class="t" style="left:2084.77px;top:756.64px;font-size:10.0px;font-weight:700;color:#000;transform:scaleX(0.9403);">AFTN</div>
<div class="b" style="left:2062px;top:783px;width:65px;height:14px;border:1px solid #ced4da;border-radius:4px;background:#fff;"></div>
<div class="b" style="left:2068.9px;top:786.9px;width:8.3px;height:8.3px;background:#6f00b3;border-radius:50%;"></div>
<div class="t" style="left:2084.77px;top:782.64px;font-size:10.0px;font-weight:700;color:#000;transform:scaleX(0.9083);">AIRCOM</div>
<div class="b" style="left:2062px;top:809px;width:64px;height:14px;border:1px solid #ced4da;border-radius:4px;background:#fff;"></div>
<div class="b" style="left:2068.9px;top:812.9px;width:8.3px;height:8.3px;background:#ed466e;border-radius:50%;"></div>
<div class="t" style="left:2084.63px;top:808.64px;font-size:10.0px;font-weight:700;color:#000;letter-spacing:-0.096px;">ПАМИР</div>
</body></html>
